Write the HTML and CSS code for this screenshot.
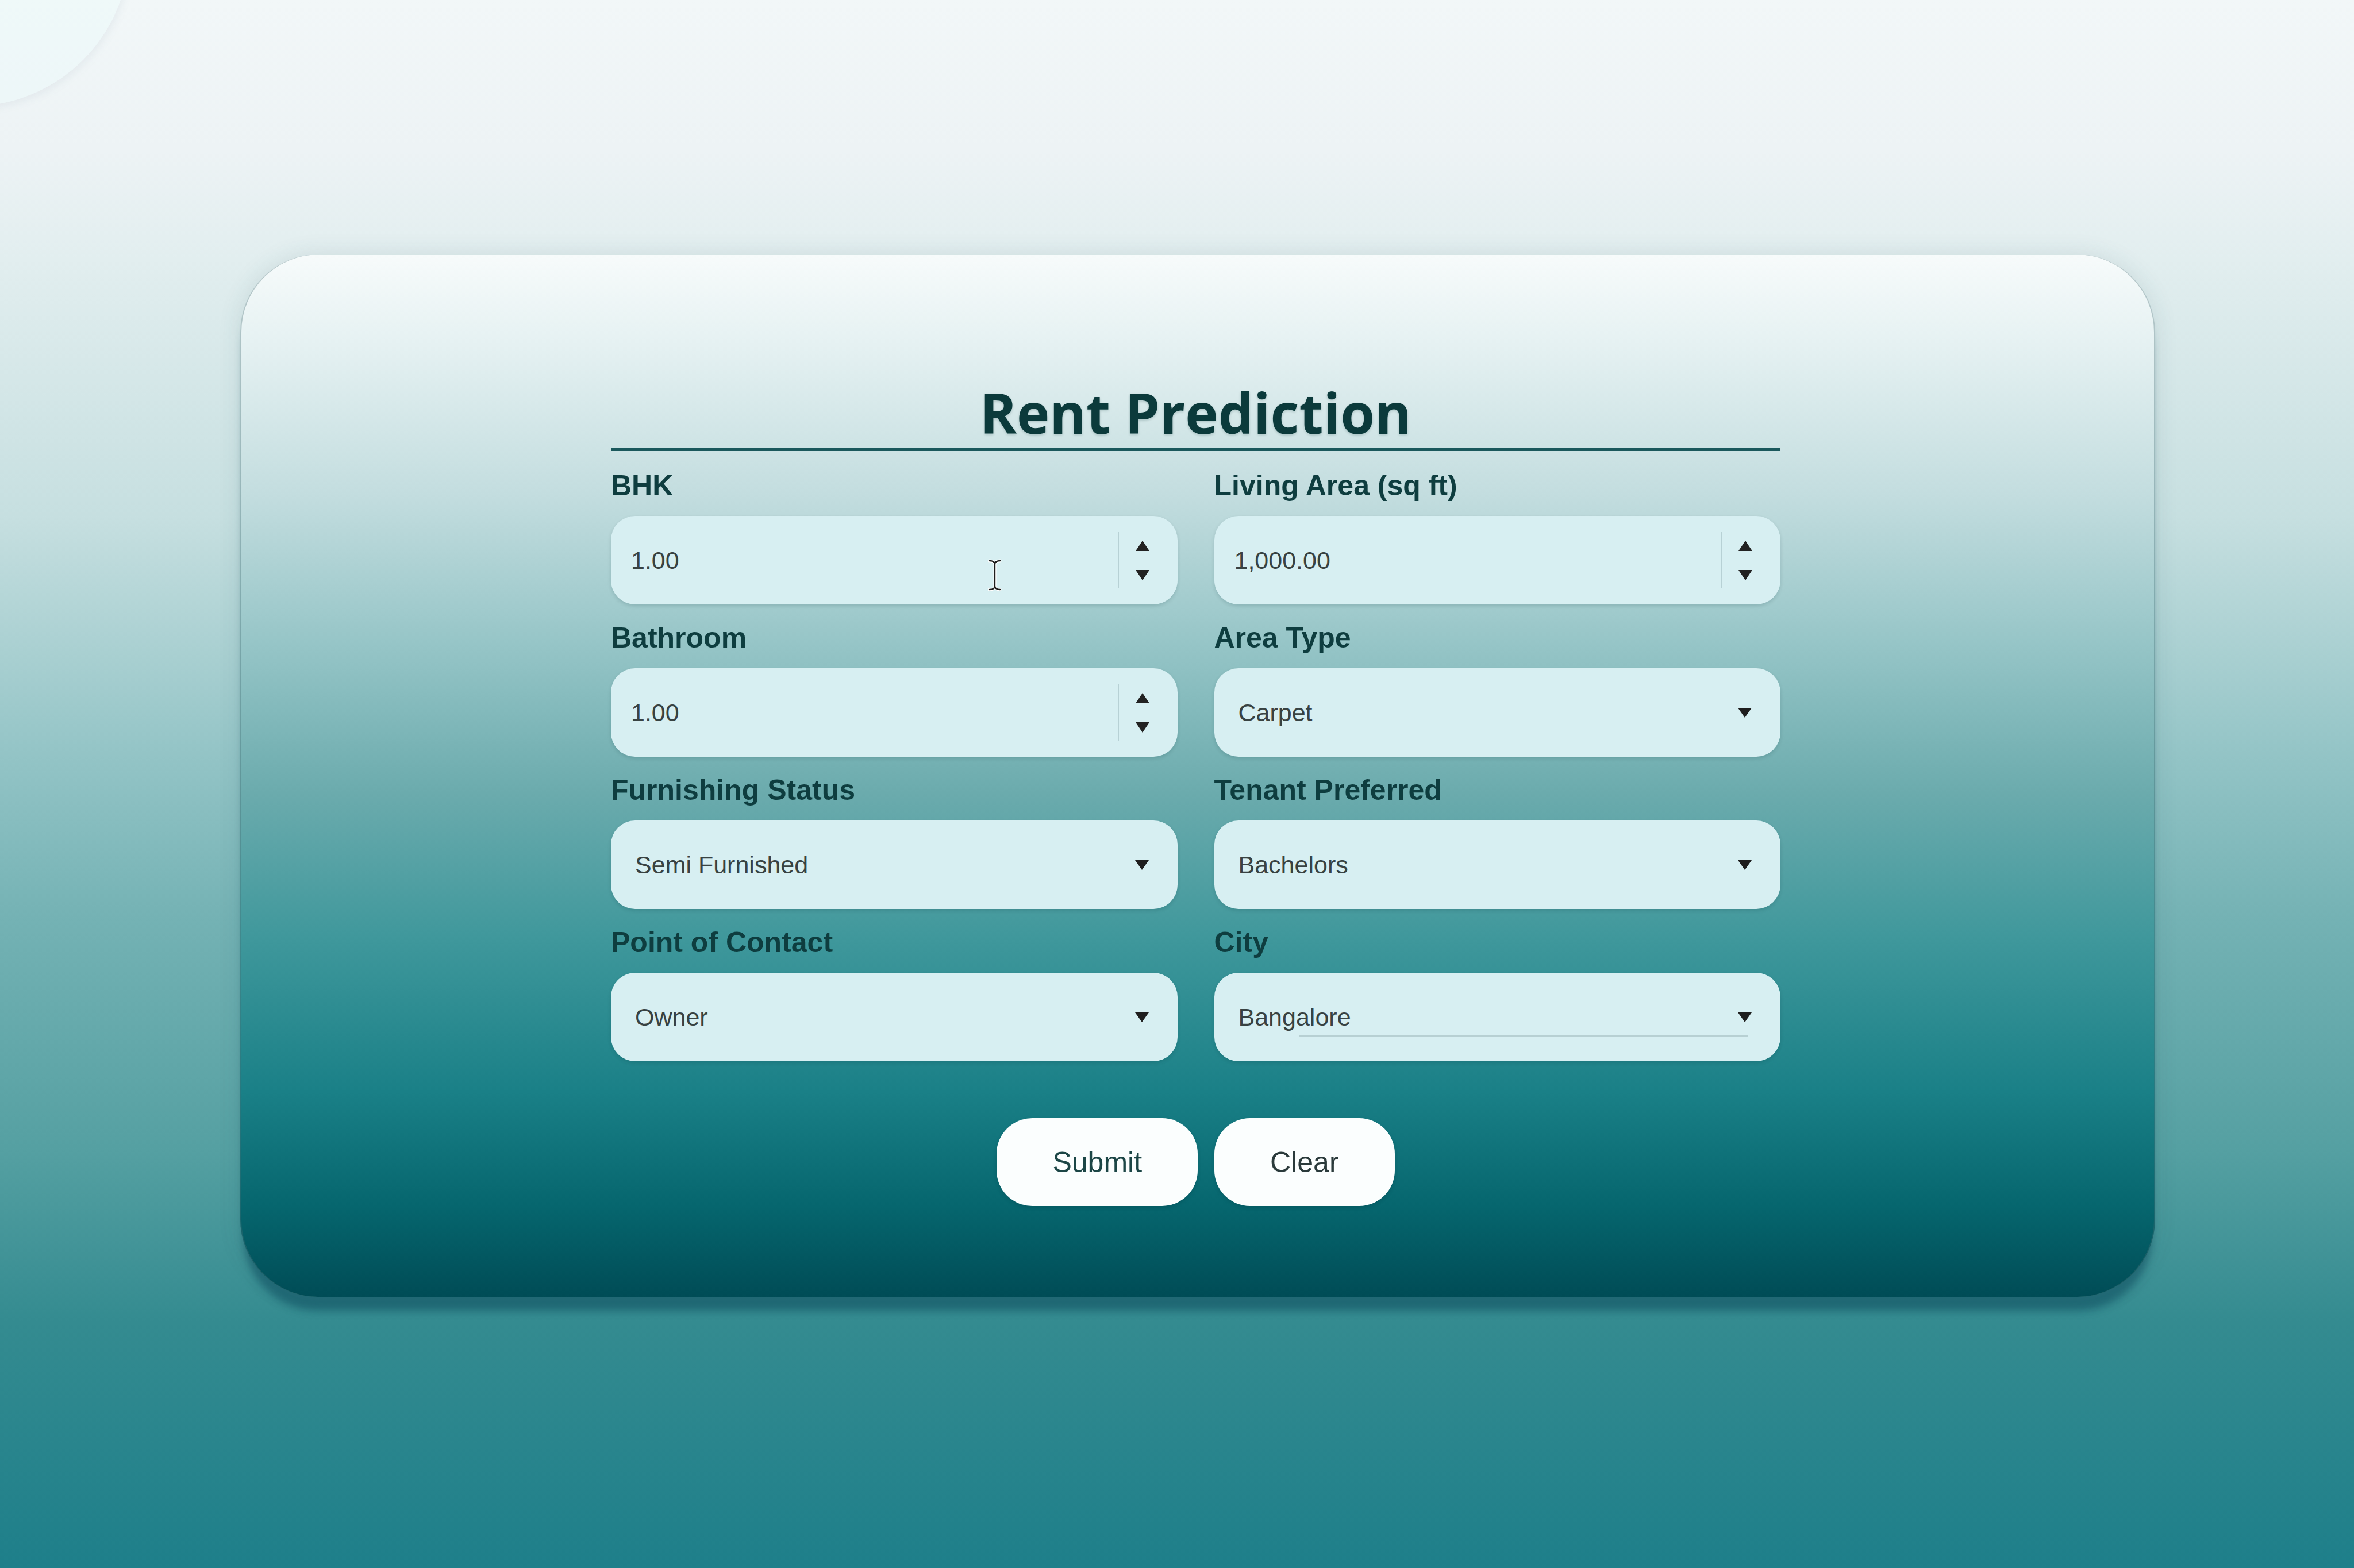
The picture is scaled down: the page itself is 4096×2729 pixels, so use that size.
FILE: index.html
```html
<!DOCTYPE html>
<html lang="en">
<head>
<meta charset="utf-8">
<title>Rent Prediction</title>
<link rel="stylesheet" href="styles.css">
</head>
<body>
<div class="bubble"></div>
<main class="card">
  <form class="form">
    <h1 class="title">Rent Prediction</h1>
    <div class="grid">
      <div class="field">
        <label class="label" for="bhk">BHK</label>
        <div class="box">
          <input class="control" id="bhk" type="text" value="1.00">
          <span class="spin"><i class="up"></i><i class="down"></i></span>
          <svg class="ibeam" viewBox="0 0 24 56" width="24" height="56" aria-hidden="true">
            <path d="M3 3 C8 3 12 5 12 9 C12 5 16 3 21 3 M12 9 V47 M3 53 C8 53 12 51 12 47 C12 51 16 53 21 53" fill="none" stroke="#ffffff" stroke-width="5" stroke-linecap="round"/>
            <path d="M3 3 C8 3 12 5 12 9 C12 5 16 3 21 3 M12 9 V47 M3 53 C8 53 12 51 12 47 C12 51 16 53 21 53" fill="none" stroke="#1d1d1d" stroke-width="2.4" stroke-linecap="round"/>
          </svg>
        </div>
      </div>
      <div class="field">
        <label class="label" for="area">Living Area (sq ft)</label>
        <div class="box">
          <input class="control" id="area" type="text" value="1,000.00">
          <span class="spin"><i class="up"></i><i class="down"></i></span>
        </div>
      </div>
      <div class="field">
        <label class="label" for="bath">Bathroom</label>
        <div class="box">
          <input class="control" id="bath" type="text" value="1.00">
          <span class="spin"><i class="up"></i><i class="down"></i></span>
        </div>
      </div>
      <div class="field">
        <label class="label" for="atype">Area Type</label>
        <div class="box">
          <select class="control select" id="atype"><option>Carpet</option><option>Super Area</option></select>
          <span class="caret"></span>
        </div>
      </div>
      <div class="field">
        <label class="label" for="furn">Furnishing Status</label>
        <div class="box">
          <select class="control select" id="furn"><option>Semi Furnished</option><option>Furnished</option><option>Unfurnished</option></select>
          <span class="caret"></span>
        </div>
      </div>
      <div class="field">
        <label class="label" for="tenant">Tenant Preferred</label>
        <div class="box">
          <select class="control select" id="tenant"><option>Bachelors</option><option>Family</option><option>Bachelors/Family</option></select>
          <span class="caret"></span>
        </div>
      </div>
      <div class="field">
        <label class="label" for="contact">Point of Contact</label>
        <div class="box">
          <select class="control select" id="contact"><option>Owner</option><option>Agent</option></select>
          <span class="caret"></span>
        </div>
      </div>
      <div class="field">
        <label class="label" for="city">City</label>
        <div class="box lined">
          <select class="control select" id="city"><option>Bangalore</option><option>Chennai</option><option>Delhi</option><option>Hyderabad</option><option>Kolkata</option><option>Mumbai</option></select>
          <span class="caret"></span>
        </div>
      </div>
    </div>
    <div class="actions">
      <button class="btn btn-submit" type="button">Submit</button>
      <button class="btn btn-clear" type="button">Clear</button>
    </div>
  </form>
</main>
</body>
</html>
```
FILE: styles.css
```css
html, body {
  margin: 0;
}

body {
  position: relative;
  box-sizing: border-box;
  height: 2729px;
  overflow: hidden;
  padding: 443px 0 0 418px;
  font-family: "Liberation Sans", Arial, sans-serif;
  background: linear-gradient(to bottom,
    #f2f7f8 0%,
    #edf3f5 9.5%,
    #e2eeef 16.5%,
    #c6dfe0 33%,
    #95c5c7 47.6%,
    #74b2b4 58.6%,
    #55a0a2 73.3%,
    #348b90 84.3%,
    #1e7f8a 100%);
}

.bubble {
  position: absolute;
  left: -325px;
  top: -365px;
  width: 550px;
  height: 550px;
  border-radius: 50%;
  background: rgba(236, 250, 251, 0.45);
  box-shadow: 3px 5px 14px rgba(130, 145, 170, 0.1);
}

.card {
  box-sizing: border-box;
  width: 3332px;
  height: 1814px;
  padding: 214px 652px 0 645px;
  border-radius: 135px;
  background: linear-gradient(to bottom,
    #f7fbfb 0%,
    #e5f1f2 8.7%,
    #c3dddf 23%,
    #96c5c7 37.3%,
    #6babad 51.7%,
    #3e979b 66%,
    #1a8087 80.3%,
    #06666e 91.3%,
    #004c56 100%);
  box-shadow:
    inset 2px 0 0 rgba(70, 110, 115, 0.35),
    inset -2px 0 0 rgba(70, 110, 115, 0.35),
    0 30px 14px -6px rgba(10, 70, 90, 0.5),
    0 0 40px rgba(40, 90, 100, 0.12);
}

.form {
  width: 2035px;
  margin: 0;
}

.title {
  margin: 0 0 34px;
  padding-bottom: 2px;
  border-bottom: 6px solid #1a585c;
  font-family: "Open Sans", "Liberation Sans", sans-serif;
  font-weight: 700;
  font-size: 97px;
  line-height: 120px;
  text-align: center;
  color: #0b3a3b;
  text-shadow: 0 2px 4px rgba(0, 50, 50, 0.2);
}

.grid {
  display: grid;
  grid-template-columns: 1fr 1fr;
  column-gap: 64px;
  row-gap: 32px;
}

.label {
  display: block;
  margin-bottom: 27px;
  font-weight: 700;
  font-size: 50px;
  line-height: 52px;
  color: #0e3d3f;
}

.box {
  position: relative;
  display: flex;
  align-items: center;
  height: 154px;
  padding-left: 35px;
  border-radius: 42px;
  background: #d7eff2;
  box-shadow: 0 3px 6px rgba(0, 40, 50, 0.14);
}

.control {
  flex: 1;
  min-width: 0;
  height: 100%;
  margin: 0;
  padding: 0;
  border: none;
  outline: none;
  background: transparent;
  font-family: "Liberation Sans", Arial, sans-serif;
  font-size: 43px;
  color: #384242;
}

.select {
  -webkit-appearance: none;
  appearance: none;
  padding-left: 7px;
}

.spin {
  display: flex;
  flex-direction: column;
  align-items: center;
  justify-content: center;
  gap: 33px;
  box-sizing: border-box;
  width: 104px;
  height: 98px;
  padding-right: 20px;
  border-left: 2px solid rgba(110, 140, 145, 0.3);
}

.up,
.down {
  display: block;
  width: 0;
  height: 0;
  border-left: 12px solid transparent;
  border-right: 12px solid transparent;
}

.up {
  border-bottom: 18px solid #222;
}

.down {
  border-top: 18px solid #222;
}

.caret {
  width: 0;
  height: 0;
  margin-right: 50px;
  border-left: 12px solid transparent;
  border-right: 12px solid transparent;
  border-top: 17px solid #1e1e1e;
  pointer-events: none;
}

.ibeam {
  position: absolute;
  left: 656px;
  top: 75px;
}

.lined::after {
  content: "";
  position: absolute;
  left: 147px;
  right: 57px;
  top: 109px;
  height: 2px;
  background: rgba(110, 135, 140, 0.3);
}

.actions {
  display: flex;
  justify-content: center;
  gap: 29px;
  margin-top: 99px;
}

.btn {
  height: 153px;
  padding: 0 97px;
  border: none;
  border-radius: 62px;
  background: #fbfefe;
  font-family: "Liberation Sans", Arial, sans-serif;
  font-size: 50px;
  box-shadow: 0 3px 6px rgba(0, 40, 50, 0.18);
}

.btn-submit {
  color: #1c4646;
}

.btn-clear {
  color: #2a3a3b;
}
```
